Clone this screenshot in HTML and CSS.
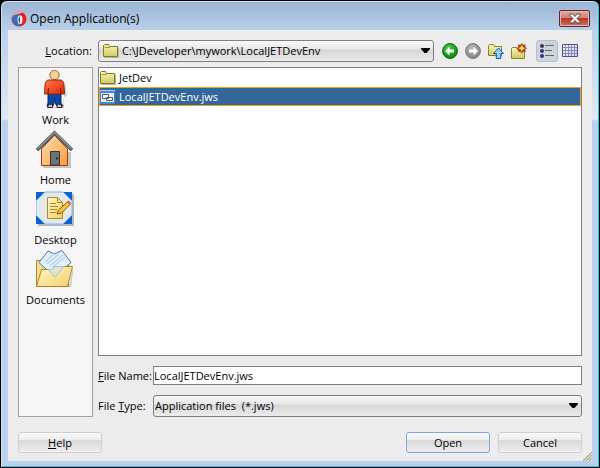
FILE: index.html
```html
<!DOCTYPE html>
<html lang="en">
<head>
  <meta charset="UTF-8">
  <meta name="viewport" content="width=device-width, initial-scale=1.0">
  <title>Open Application(s)</title>
  <link rel="stylesheet" href="styles.css">
</head>
<body>
  <!-- shared icon shapes -->
  <svg width="0" height="0" class="defs" aria-hidden="true">
    <defs>
      <linearGradient id="gFolder" x1="0" y1="0" x2="0" y2="1">
        <stop offset="0" stop-color="#f8f6b4"/>
        <stop offset="1" stop-color="#d0ca66"/>
      </linearGradient>
      <linearGradient id="gGrid" x1="0" y1="0" x2="1" y2="1">
        <stop offset="0" stop-color="#fff"/>
        <stop offset="1" stop-color="#c9cbf0"/>
      </linearGradient>
      <linearGradient id="gHouse" x1="0" y1="0" x2="1" y2="1">
        <stop offset="0" stop-color="#ffe2b8"/>
        <stop offset="1" stop-color="#ff9a3c"/>
      </linearGradient>
      <linearGradient id="gShirt" x1="0" y1="0" x2="1" y2="1">
        <stop offset="0" stop-color="#ff7a4a"/>
        <stop offset="1" stop-color="#e02800"/>
      </linearGradient>
      <linearGradient id="gTan" x1="0" y1="0" x2="1" y2="1">
        <stop offset="0" stop-color="#fff8c8"/>
        <stop offset="1" stop-color="#f3cf6c"/>
      </linearGradient>
      <radialGradient id="gGreen" cx=".4" cy=".3" r=".7">
        <stop offset="0" stop-color="#3fd23f"/>
        <stop offset="1" stop-color="#078a0c"/>
      </radialGradient>
      <radialGradient id="gGray" cx=".4" cy=".3" r=".7">
        <stop offset="0" stop-color="#b8b8b8"/>
        <stop offset="1" stop-color="#858585"/>
      </radialGradient>
      <symbol id="folder" viewBox="0 0 16 16">
        <path d="M1.5 14.5h14v-10" fill="none" stroke="#b4b4a4"/>
        <path d="M.5 13.5v-11l1-1h4l1 2h8v10z" fill="url(#gFolder)" stroke="#807a1c"/>
        <path d="M1.5 4.5h5l1-1" fill="none" stroke="#a39c3a"/>
      </symbol>
    </defs>
  </svg>

  <div class="window">
    <header class="titlebar">
      <svg class="logo" width="16" height="16" viewBox="0 0 16 16">
        <circle cx="8" cy="8" r="7.5" fill="#ee1c1c"/>
        <path d="M.8 6C2 1 8-1 12 1.800 8 2.500 5 3.500 4 6z" fill="#f2a49c"/>
        <path d="M1.500 5C5 2.500 9 3 10.500 5L9 14.800C4 16 0 11 1.500 5z" fill="#3c6eb4"/>
        <ellipse cx="9" cy="8.700" rx="2.500" ry="4.200" fill="#f4f7fc"/>
        <path d="M8.500 5c-1.500 2-1.500 5.500 0 7.500 1-2 1-5.500 0-7.500z" fill="#2b5aa6"/>
      </svg>
      <h1>Open Application(s)</h1>
      <button class="close" aria-label="Close">
        <svg width="12" height="11" viewBox="0 0 12 11">
          <path d="M1 1h3l2 2.500L8 1h3v1.500L8 5.500l3 3V10H8L6 7.500 4 10H1V8.500l3-3-3-3z" fill="#fff" stroke="#5a4650"/>
        </svg>
      </button>
    </header>

    <main class="dialog">
      <label class="location-label" for="location"><u>L</u>ocation:</label>
      <div class="location-row">
        <div class="combo with-icon">
          <svg class="combo-icon" width="16" height="16"><use href="#folder"/></svg>
          <select id="location"><option>C:\JDeveloper\mywork\LocalJETDevEnv</option></select>
          <svg class="arrow" width="9" height="5" viewBox="0 0 9 5"><path d="M0 0h9v1L5.500 5h-2L0 1z"/></svg>
        </div>
        <div class="toolbar">
          <button aria-label="Back">
            <svg width="16" height="16" viewBox="0 0 16 16">
              <circle cx="8" cy="8" r="7.400" fill="url(#gGreen)" stroke="#0a5c10"/>
              <path d="M3 8l4.500-4.500V6.500H12v3H7.500v3z" fill="#fff"/>
            </svg>
          </button>
          <button aria-label="Forward">
            <svg width="16" height="16" viewBox="0 0 16 16">
              <circle cx="8" cy="8" r="7.400" fill="url(#gGray)" stroke="#747474"/>
              <path d="M13 8L8.500 3.500V6.500H4v3h4.500v3z" fill="#fff"/>
            </svg>
          </button>
          <button aria-label="Up one level">
            <svg width="16" height="16" viewBox="0 0 16 16">
              <path d="M.5 12.500V2.500l1-1h4l1 2h7v9z" fill="url(#gFolder)" stroke="#8f8326"/>
              <path d="M10.500 5l5 5.500h-2.700v5H8.300v-5H5.500z" fill="#8fd0ff" stroke="#1556b8"/>
            </svg>
          </button>
          <button aria-label="New folder">
            <svg width="16" height="16" viewBox="0 0 16 16">
              <path d="M.5 15.500v-10l1-1h4l1 2h7v9z" fill="url(#gFolder)" stroke="#8f8326"/>
              <path d="M10.800 0l1.500 2 2.400-.6-.6 2.400 1.900 1.400-1.900 1.400.6 2.400-2.400-.6-1.500 2-1.500-2-2.400.6.6-2.400-1.900-1.400 1.900-1.400-.6-2.400 2.400.6z" fill="#b02a10"/>
              <path d="M10.800 1.500l1.200 2.600 2.600 1.100L12 6.300l-1.200 2.600-1.200-2.600L7 5.200l2.600-1.100z" fill="#ffe84c"/>
            </svg>
          </button>
          <button class="view on" aria-label="List view" aria-pressed="true">
            <svg width="16" height="16" viewBox="0 0 16 16">
              <path d="M6 2.500h9M6 7.500h7M6 12.500h9" stroke="#686870"/>
              <g fill="#36366e"><circle cx="3" cy="3" r="2"/><circle cx="3" cy="8" r="2"/><circle cx="3" cy="13" r="2"/></g>
            </svg>
          </button>
          <button aria-label="Details view">
            <svg width="16" height="14" viewBox="0 0 16 14">
              <path d="M.5.5h15v12H.5z" fill="url(#gGrid)"/>
              <path d="M3.500 1v11M6.500 1v11M9.500 1v11M12.500 1v11M1 3.500h14M1 6.500h14M1 9.500h14" stroke="#8486b8"/>
              <path d="M.5.5h15v12H.5z" fill="none" stroke="#50508c"/>
            </svg>
          </button>
        </div>
      </div>

      <nav class="places">
        <button>
          <svg width="40" height="40" viewBox="1 1 40 40">
            <path d="M30 14l2 13-3 1v11H15l-2-1h15z" fill="#ccc"/>
            <circle cx="19.500" cy="6" r="4.700" fill="#f6cf96" stroke="#936a3c"/>
            <path d="M13 24h13v10l2 3h-6l-2-3-.5-6-.5 6-1 3h-6l1-3z" fill="#0b47a8" stroke="#062b74"/>
            <path d="M14 11h11c3 0 4 3 4 6l.5 8h-3l-1-6v6h-12v-6l-1 6h-3l.5-8c0-3 1-6 4-6z" fill="url(#gShirt)" stroke="#942009"/>
            <path d="M13.500 35.500l4-.5v3.500h-5zM22 35l4 .5 1 3h-5z" fill="#c8ccd4" stroke="#222"/>
          </svg>
          <span>Work</span>
        </button>
        <button>
          <svg width="40" height="40" viewBox="1 0 40 40">
            <path d="M8 22v16h28V22z" fill="#c4c4c4"/>
            <path d="M6.500 35.500V19L19.500 5l13 14v16.500z" fill="url(#gHouse)" stroke="#a03c10"/>
            <path d="M2 20L19.500 3 37 20" fill="none" stroke="#505454" stroke-width="3.500"/>
            <path d="M2.500 19L19.500 2.500 36.500 19" fill="none" stroke="#8d9292" stroke-width="1.500"/>
            <path d="M15.500 35V21.500h9V35z" fill="#6d7476" stroke="#303434"/>
            <circle cx="22" cy="28.500" r="1" fill="#111"/>
          </svg>
          <span>Home</span>
        </button>
        <button>
          <svg width="40" height="40" viewBox="0 0 40 40">
            <path d="M2 4h36v32H2z" fill="#b8b8b8"/>
            <path d="M0 2h36v32H0z" fill="#0c63cf"/>
            <path d="M9 2h18l9 9v14l-9 9H9l-9-9V11z" fill="#e4e9f0" stroke="#7fb2ec"/>
            <path d="M11.500 7.500h10l5 5v16h-15z" fill="url(#gTan)" stroke="#b28b14"/>
            <path d="M21.500 7.500v5h5M14 13.500h6M14 16.500h8M14 19.500h7M14 22.500h6" fill="none" stroke="#b28b14"/>
            <path d="M21 24l1.500-4L32 11.500l2.500 2.500-9 9z" fill="#ffc52e" stroke="#86520b"/>
            <path d="M31 12l1.500-1.500 2.500 2.500-1.500 1.500z" fill="#e2553c"/>
          </svg>
          <span>Desktop</span>
        </button>
        <button>
          <svg width="40" height="40" viewBox="0 2 40 40">
            <path d="M4 39h29l4-20v5l-2 15z" fill="#c8c8c8"/>
            <path d="M.5 38.500v-26h7l3 3h22v23z" fill="#f5dd8c" stroke="#b08326"/>
            <path d="M18.500 29L3 14.500 12 3l6.500 3L26 2.500l9 12z" fill="#e2f0fc" stroke="#3b78c8"/>
            <path d="M9 14l8-7M11 16L23 6M14 18L27 7M17 19l12-10" stroke="#9cbde6"/>
            <path d="M.5 38.500l5-17H16l3-3h17.500l-5 20z" fill="url(#gTan)" stroke="#b08326"/>
            <path d="M12 21.500h4l3-3h9L19 29z" fill="#dbe7d2" stroke="#a9c3c4"/>
          </svg>
          <span>Documents</span>
        </button>
      </nav>

      <div class="files">
        <ul class="file-list" role="listbox" aria-label="Files">
          <li role="option"><svg width="16" height="16"><use href="#folder"/></svg><span>JetDev</span></li>
          <li role="option" class="selected" aria-selected="true">
            <svg width="16" height="16" viewBox="0 0 16 16">
              <path d="M0 1h15v14H0z" fill="#3f86e8"/>
              <path d="M0 1h15v1H0z" fill="#a9d0ff"/>
              <path d="M1 4h13v9H1z" fill="#e4effc"/>
              <path d="M2.500 5.500h6v4h-6zM6.500 8.500h6v3h-6z" fill="#fff" stroke="#55595c"/>
            </svg>
            <span>LocalJETDevEnv.jws</span>
          </li>
        </ul>
        <div class="field">
          <label for="filename"><u>F</u>ile Name:</label>
          <input id="filename" type="text" value="LocalJETDevEnv.jws">
        </div>
        <div class="field">
          <label for="filetype">File <u>T</u>ype:</label>
          <div class="combo">
            <select id="filetype"><option>Application files &nbsp;(*.jws)</option></select>
            <svg class="arrow" width="9" height="5" viewBox="0 0 9 5"><path d="M0 0h9v1L5.500 5h-2L0 1z"/></svg>
          </div>
        </div>
      </div>

      <footer class="actions">
        <button class="btn help"><u>H</u>elp</button>
        <button class="btn default">Open</button>
        <button class="btn">Cancel</button>
      </footer>
      <svg class="grip" width="9" height="9" viewBox="0 0 9 9">
        <path d="M0 9l9-9M3 9l6-6M6 9l3-3" stroke="#a5a592" stroke-width="1.200"/>
      </svg>
    </main>
  </div>
</body>
</html>
```
FILE: styles.css
```css
* {
  box-sizing: border-box;
}
body {
  margin: 0;
  background: #000;
  font-family: "Open Sans", "Noto Sans", sans-serif;
  font-size: 11px;
  line-height: 16px;
  color: #000;
}
button, input, select {
  font: inherit;
  color: inherit;
  margin: 0;
}
svg {
  flex: none;
}
.defs {
  position: absolute;
}

/* window frame */
.window {
  display: flex;
  flex-direction: column;
  min-height: 100vh;
  padding: 0 7px 6px;
  border: 1px solid #000;
  border-radius: 7px 7px 0 0;
  background: linear-gradient(#99b4d2, #b9d1ea 30px, #dfeaf6 118px, #b9d1ea 120px);
  box-shadow: inset 1px 1px 0 #c8e4f2, inset -1px -1px 0 #2fc8e0;
}
.titlebar {
  display: flex;
  align-items: center;
  gap: 3px;
  height: 29px;
  padding: 6px 2px 0 3px;
}
.titlebar h1 {
  flex: 1;
  margin: 0;
  font-size: 12px;
  font-weight: normal;
}
.close {
  display: flex;
  align-items: center;
  justify-content: center;
  width: 31px;
  height: 17px;
  padding: 0;
  border: 1px solid #5c2a2e;
  border-radius: 2px;
  background: linear-gradient(#e3a79c, #d08074 48%, #b8382a 50%, #d0705c);
  box-shadow: inset 0 0 0 1px #e8b8b0;
}

/* dialog body */
.dialog {
  position: relative;
  flex: 1;
  display: grid;
  grid-template-columns: 75px 1fr;
  grid-template-rows: auto 1fr auto;
  column-gap: 5px;
  padding: 10px 10px 8px;
  background: #ececec;
}
.location-label {
  justify-self: end;
  padding: 3px 1px 0 0;
}
.location-row {
  display: flex;
  gap: 5px;
  margin-bottom: 5px;
}
.combo {
  position: relative;
  flex: 1;
  display: flex;
  height: 22px;
}
.combo select {
  flex: 1;
  min-width: 0;
  padding: 0 20px 0 1px;
  border: 1px solid #808080;
  border-radius: 3px;
  background: linear-gradient(#f8f8f8, #e8e8e8 40%, #d6d6d6 45%, #ececec);
  appearance: none;
}
.combo.with-icon select {
  padding-left: 23px;
}
.combo-icon {
  position: absolute;
  top: 3px;
  left: 5px;
  pointer-events: none;
}
.arrow {
  position: absolute;
  top: 8px;
  right: 4px;
  pointer-events: none;
}
.toolbar {
  display: flex;
  gap: 1px;
  padding-right: 1px;
}
.toolbar button {
  display: flex;
  align-items: center;
  justify-content: center;
  width: 22px;
  height: 22px;
  padding: 0;
  border: 0;
  background: none;
}
.toolbar .view {
  margin-left: 5px;
}
.toolbar .on {
  border: 1px solid #b6bfca;
  border-radius: 3px;
  background: #cdd4dd;
}

/* shortcuts on the left */
.places {
  padding-top: 2px;
  border: 1px solid #a5a592;
  background: #f6f6f6;
}
.places button {
  display: flex;
  flex-direction: column;
  align-items: center;
  width: 100%;
  height: 60px;
  padding: 0;
  border: 0;
  background: none;
}
.places span {
  line-height: 20px;
}

.files {
  display: flex;
  flex-direction: column;
  gap: 10px;
}
.file-list {
  flex: 1;
  margin: 0;
  padding: 0;
  border: 1px solid #808080;
  background: #fff;
  list-style: none;
}
.file-list li {
  display: flex;
  align-items: center;
  gap: 3px;
  height: 19px;
  border: 1px solid transparent;
}
.file-list .selected {
  border-color: #f0a010;
  background: #336699;
  color: #fff;
}
.field {
  display: flex;
  align-items: center;
}
.field label {
  width: 55px;
  white-space: nowrap;
}
.field input {
  flex: 1;
  min-width: 0;
  height: 19px;
  padding: 0;
  border: 1px solid #808080;
  background: #fff;
}

.actions {
  grid-column: 1 / -1;
  display: flex;
  gap: 8px;
  margin-top: 15px;
}
.btn {
  width: 84px;
  height: 21px;
  padding: 0;
  border: 1px solid #cfcfcf;
  border-radius: 3px;
  background: linear-gradient(#fafafa, #ececec 35%, #d9d9d9 40%, #efefef);
}
.btn.help {
  margin-right: auto;
}
.btn.default {
  border-color: #7aa7dc;
}
.grip {
  position: absolute;
  right: 0;
  bottom: 0;
}
```
